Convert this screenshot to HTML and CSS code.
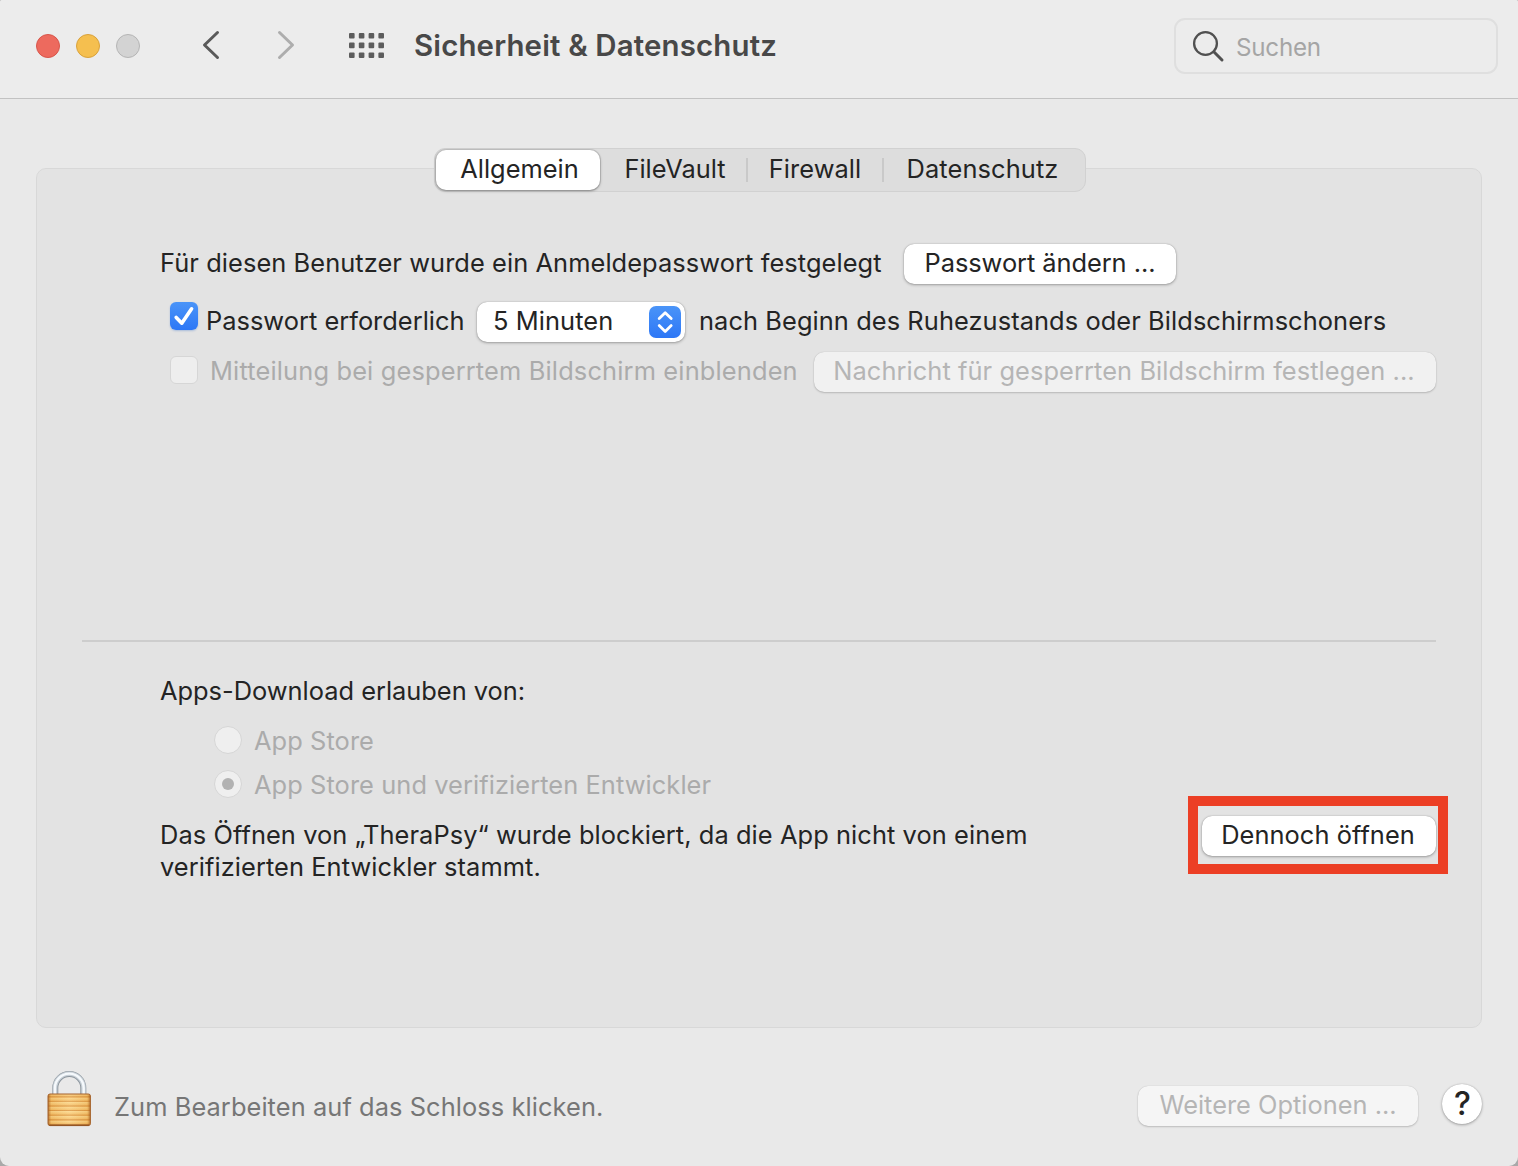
FILE: index.html
```html
<!DOCTYPE html>
<html lang="de">
<head>
    <meta charset="UTF-8">
    <meta name="viewport" content="width=device-width, initial-scale=1.0">
    <title>Sicherheit &amp; Datenschutz</title>
    <link rel="stylesheet" href="styles.css">
</head>
<body>
    <div class="window">
        <header class="titlebar">
            <div class="lights">
                <span class="light close"></span>
                <span class="light minimize"></span>
                <span class="light zoom"></span>
            </div>
            <svg class="nav-back" width="20" height="32" viewBox="0 0 20 32"><path d="M16.5 3.5 L3.5 16 L16.5 28.5"/></svg>
            <svg class="nav-forward" width="20" height="32" viewBox="0 0 20 32"><path d="M3.5 3.5 L16.5 16 L3.5 28.5"/></svg>
            <svg class="grid-icon" width="36" height="26" viewBox="0 0 36 26">
                <g id="row">
                    <rect x="0" y="0" width="5.6" height="5.6" rx="1"/>
                    <rect x="9.8" y="0" width="5.6" height="5.6" rx="1"/>
                    <rect x="19.6" y="0" width="5.6" height="5.6" rx="1"/>
                    <rect x="29.4" y="0" width="5.6" height="5.6" rx="1"/>
                </g>
                <use href="#row" y="9.6"/>
                <use href="#row" y="19.4"/>
            </svg>
            <h1 class="title">Sicherheit &amp; Datenschutz</h1>
            <div class="search">
                <svg width="34" height="34" viewBox="0 0 34 34"><circle cx="13.5" cy="13.5" r="11.4"/><path d="M21.8 21.8 L30 30" stroke-width="3"/></svg>
                <span class="search-text">Suchen</span>
            </div>
        </header>

        <main class="content">
            <nav class="tabs">
                <button class="tab active">Allgemein</button>
                <button class="tab vault">FileVault</button>
                <button class="tab firewall">Firewall</button>
                <button class="tab privacy">Datenschutz</button>
            </nav>

            <section class="panel">
                <!-- Login password -->
                <div class="row row-login">
                    <span class="label l-login">Für diesen Benutzer wurde ein Anmeldepasswort festgelegt</span>
                    <button class="button b-change">Passwort ändern ...</button>
                </div>
                <div class="row row-require">
                    <span class="checkbox checked">
                        <svg width="28" height="28" viewBox="0 0 28 28"><path d="M6.2 15.4 L11.8 21.2 L21.6 6.8"/></svg>
                    </span>
                    <span class="label l-require">Passwort erforderlich</span>
                    <div class="select">
                        <span class="label">5 Minuten</span>
                        <span class="stepper">
                            <svg width="32" height="32" viewBox="0 0 32 32"><path d="M10.2 12.6 L16.2 6.8 L22.2 12.6 M10.2 19.6 L16.2 25.4 L22.2 19.6"/></svg>
                        </span>
                    </div>
                    <span class="label">nach Beginn des Ruhezustands oder Bildschirmschoners</span>
                </div>
                <div class="row row-message">
                    <span class="checkbox"></span>
                    <span class="label l-message disabled">Mitteilung bei gesperrtem Bildschirm einblenden</span>
                    <button class="button b-message" disabled>Nachricht für gesperrten Bildschirm festlegen ...</button>
                </div>

                <hr class="divider">

                <!-- App downloads -->
                <div class="downloads">
                    <span class="downloads-title">Apps-Download erlauben von:</span>
                    <div class="radio-row">
                        <span class="radio"></span>
                        <span class="disabled">App Store</span>
                    </div>
                    <div class="radio-row">
                        <span class="radio selected"></span>
                        <span class="disabled">App Store und verifizierten Entwickler</span>
                    </div>
                </div>
                <div class="blocked">
                    <p class="blocked-text">Das Öffnen von „TheraPsy“ wurde blockiert, da die App nicht von einem<br>verifizierten Entwickler stammt.</p>
                    <div class="highlight">
                        <button class="button b-open">Dennoch öffnen</button>
                    </div>
                </div>
            </section>
        </main>

        <footer class="footer">
            <svg class="lock" width="46" height="58" viewBox="0 0 46 58">
                <defs>
                    <linearGradient id="brass" x1="0" y1="0" x2="0" y2="4.6" gradientUnits="userSpaceOnUse" spreadMethod="repeat">
                        <stop offset="0" stop-color="#fbd88a"/>
                        <stop offset="0.6" stop-color="#f6c26a"/>
                        <stop offset="0.8" stop-color="#dc9944"/>
                        <stop offset="1" stop-color="#efb55e"/>
                    </linearGradient>
                    <linearGradient id="edge" x1="0" y1="0" x2="1" y2="0">
                        <stop offset="0" stop-color="#9a5218" stop-opacity="0.75"/>
                        <stop offset="0.08" stop-color="#c67a2a" stop-opacity="0.15"/>
                        <stop offset="0.5" stop-color="#ffffff" stop-opacity="0.12"/>
                        <stop offset="0.92" stop-color="#c67a2a" stop-opacity="0.15"/>
                        <stop offset="1" stop-color="#9a5218" stop-opacity="0.75"/>
                    </linearGradient>
                </defs>
                <path d="M9.3 25 V18 a14 14 0 0 1 28 0 V25" fill="none" stroke="#8b949c" stroke-width="6"/>
                <path d="M9.1 25 V18 a14.2 14.2 0 0 1 28.4 0 V25" fill="none" stroke="#c6ced5" stroke-width="4.6"/>
                <path d="M8.9 25 V18 a14.4 14.4 0 0 1 28.8 0 V25" fill="none" stroke="#f5f9fc" stroke-width="2.4"/>
                <rect x="2" y="24" width="42.4" height="31.6" rx="2" fill="url(#brass)"/>
                <rect x="2" y="24" width="42.4" height="31.6" rx="2" fill="url(#edge)" stroke="#a5632c" stroke-width="1"/>
                <path d="M3.4 55.2 H43" stroke="#8d4f20" stroke-width="1.2"/>
            </svg>
            <span class="lock-text">Zum Bearbeiten auf das Schloss klicken.</span>
            <button class="button b-more" disabled>Weitere Optionen ...</button>
            <button class="help">?</button>
        </footer>
    </div>
</body>
</html>
```
FILE: styles.css
```css
* {
    box-sizing: border-box;
}
body {
    margin: 0;
    background: #a9a9a9;
    color: #242424;
    font-family: Inter, "Liberation Sans", sans-serif;
    font-size: 25.4px;
    letter-spacing: 0.08px;
    line-height: 32px;
}
button {
    margin: 0;
    padding: 0;
    border: none;
    background: none;
    color: inherit;
    font: inherit;
    letter-spacing: 0;
}
span {
    white-space: nowrap;
}
svg {
    display: block;
    flex: none;
}
.window {
    display: flex;
    flex-direction: column;
    width: 1518px;
    height: 1166px;
    background: #e9e9e9;
    border-radius: 2px 2px 9px 9px;
    overflow: hidden;
}

/* Title bar */
.titlebar {
    display: flex;
    align-items: center;
    height: 99px;
    padding: 0 20px 7px 36px;
    background: #ececec;
    border-bottom: 1px solid #c2c2c2;
}
.lights {
    display: flex;
    gap: 16px;
    margin-right: 61px;
}
.light {
    width: 24px;
    height: 24px;
    border-radius: 50%;
}
.close {
    background: #ed6a5e;
    border: 1px solid #d8564b;
}
.minimize {
    background: #f5bf4f;
    border: 1px solid #d9a23c;
}
.zoom {
    background: #d3d3d3;
    border: 1px solid #b5b5b5;
}
.nav-back, .nav-forward {
    fill: none;
    stroke: #5a5a5a;
    stroke-width: 3;
    stroke-linecap: round;
    stroke-linejoin: round;
    margin-bottom: 2px;
}
.nav-forward {
    stroke: #adadad;
    margin-left: 55px;
}
.grid-icon {
    margin-left: 53px;
    fill: #5c5c5c;
}
.title {
    margin: 1px 0 0 29px;
    color: #484848;
    font-size: 29.4px;
    font-weight: 600;
    letter-spacing: 0.17px;
    line-height: 36px;
    white-space: nowrap;
}
.search {
    display: flex;
    align-items: center;
    width: 324px;
    height: 56px;
    margin-left: auto;
    padding-left: 16px;
    border: 2px solid #dfdfdf;
    border-radius: 11px;
}
.search svg {
    margin-top: 3px;
    fill: none;
    stroke: #505050;
    stroke-width: 2.3;
    stroke-linecap: round;
}
.search-text {
    margin: 5px 0 0 10px;
    color: #a5a5a5;
    font-size: 24.2px;
    letter-spacing: -0.25px;
}

/* Tabs */
.content {
    display: flex;
    flex-direction: column;
    padding: 49px 36px 0;
}
.tabs {
    display: flex;
    align-self: center;
    z-index: 1;
    width: 652px;
    height: 44px;
    margin: 0 0 -24px 2px;
    padding: 1px;
    background: #dddddd;
    border: 1px solid #d1d1d1;
    border-radius: 11px;
}
.tab {
    display: flex;
    align-items: center;
    justify-content: center;
    padding-bottom: 2px;
}
.active {
    width: 164px;
    padding-left: 3px;
    background: #ffffff;
    border-radius: 10px;
    box-shadow: 0 0 0 1px rgba(0, 0, 0, 0.1), 0 1px 3px rgba(0, 0, 0, 0.35);
}
.vault {
    width: 146px;
    padding-left: 4px;
}
.firewall {
    width: 136px;
    letter-spacing: 0.08px;
}
.privacy {
    flex: 1;
    padding-right: 3px;
    letter-spacing: 0.12px;
}
/* short separators between inactive tabs */
.firewall::before, .privacy::before {
    content: "";
    width: 2px;
    height: 24px;
    margin: 2px auto 0 0;
    background: #c9c9c9;
}
.firewall::after, .privacy::after {
    content: "";
    margin-left: auto;
}

/* Panel */
.panel {
    height: 860px;
    padding: 75px 33px 0 123px;
    background: #e3e3e3;
    border: 1px solid #d8d8d8;
    border-radius: 10px;
}
.row {
    display: flex;
    align-items: center;
    height: 40px;
}
.label {
    flex: none;
    padding-bottom: 2px;
}
.disabled {
    color: #ababab;
}
.button {
    display: flex;
    align-items: center;
    justify-content: center;
    flex: none;
    height: 40px;
    padding-bottom: 2px;
    background: #ffffff;
    border-radius: 10px;
    box-shadow: 0 0 1px rgba(0, 0, 0, 0.35), 0 1px 3px rgba(0, 0, 0, 0.3);
}
.button:disabled {
    background: #f1f1f1;
    color: #b5b5b5;
    box-shadow: 0 0 1px rgba(0, 0, 0, 0.2), 0 1px 2px rgba(0, 0, 0, 0.18);
}
.l-login {
    width: 744px;
}
.b-change {
    width: 272px;
    letter-spacing: -0.05px;
}
.row-require {
    margin-top: 18px;
    padding-left: 10px;
}
.checkbox {
    flex: none;
    width: 28px;
    height: 28px;
    margin-bottom: 4px;
    background: #eeeeee;
    border: 1px solid #d6d6d6;
    border-radius: 6px;
}
.checked {
    margin-bottom: 13px;
    background: linear-gradient(#4a94f8, #2d77f6);
    border: none;
    box-shadow: 0 1px 2px rgba(0, 80, 200, 0.25);
}
.checked svg, .stepper svg {
    fill: none;
    stroke: #ffffff;
    stroke-width: 3.6;
    stroke-linecap: round;
    stroke-linejoin: round;
}
.l-require {
    width: 279px;
    padding-left: 8px;
    letter-spacing: 0.02px;
}
.select {
    display: flex;
    align-items: center;
    justify-content: space-between;
    width: 208px;
    height: 40px;
    margin-right: 14px;
    padding: 0 4px 0 16px;
    background: #ffffff;
    border-radius: 10px;
    box-shadow: 0 0 1px rgba(0, 0, 0, 0.35), 0 1px 3px rgba(0, 0, 0, 0.3);
}
.stepper {
    width: 32px;
    height: 32px;
    background: linear-gradient(#4a94f8, #2d77f6);
    border-radius: 7px;
}
.stepper svg {
    stroke-width: 2.8;
}
.row-message {
    margin-top: 10px;
    padding-left: 10px;
}
.l-message {
    width: 616px;
    padding-left: 12px;
    letter-spacing: 0.16px;
}
.b-message {
    width: 622px;
    padding-right: 2px;
    letter-spacing: 0.08px;
}
.divider {
    height: 2px;
    margin: 248px 12px 0 -78px;
    border: none;
    background: #cdcdcd;
}

/* App downloads */
.downloads {
    display: flex;
    flex-direction: column;
    padding-top: 33px;
}
.downloads-title {
    margin-bottom: 18px;
    letter-spacing: 0;
}
.radio-row {
    display: flex;
    align-items: center;
    height: 32px;
    margin-bottom: 12px;
    padding-left: 54px;
}
.radio {
    display: flex;
    width: 28px;
    height: 28px;
    margin: 0 12px 2px 0;
    background: #efefef;
    border: 1px solid #d6d6d6;
    border-radius: 50%;
}
.selected::before {
    content: "";
    width: 12px;
    height: 12px;
    margin: auto;
    background: #b2b2b2;
    border-radius: 50%;
}
.blocked {
    display: flex;
    justify-content: space-between;
    margin-top: -17px;
}
.blocked-text {
    margin: 23px 0 0;
}
.highlight {
    display: flex;
    width: 260px;
    height: 78px;
    padding: 10px 2px 0 4px;
    border: 10px solid #ec3f25;
}
.b-open {
    width: 234px;
    padding-right: 2px;
    letter-spacing: 0.06px;
}

/* Footer */
.footer {
    display: flex;
    align-items: center;
    padding: 42px 36px 0 46px;
}
.lock-text {
    margin: 15px auto 0 22px;
    color: #767676;
}
.b-more {
    width: 280px;
    margin: 13px 24px 0 0;
}
.b-more:disabled {
    background: #f5f5f5;
}
.help {
    width: 40px;
    height: 40px;
    margin-top: 9px;
    padding-left: 1px;
    background: #ffffff;
    border-radius: 50%;
    box-shadow: 0 0 1px rgba(0, 0, 0, 0.3), 0 1px 3px rgba(0, 0, 0, 0.3);
    font-size: 32px;
    font-weight: 500;
    line-height: 40px;
}
```
